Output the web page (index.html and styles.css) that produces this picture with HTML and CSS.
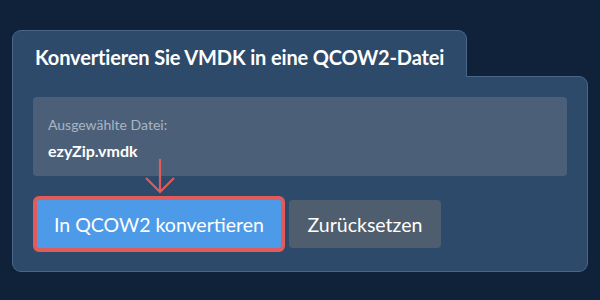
FILE: index.html
```html
<!DOCTYPE html>
<html lang="de">
<head>
    <meta charset="UTF-8">
    <meta name="viewport" content="width=device-width, initial-scale=1.0">
    <title>VMDK in QCOW2</title>
    <link rel="stylesheet" href="styles.css">
</head>
<body>
<div class="converter">
    <div class="tab">
        <h2>Konvertieren Sie VMDK in eine QCOW2-Datei</h2>
    </div>
    <div class="panel">
        <div class="filebox">
            <p class="label">Ausgewählte Datei:</p>
            <p class="filename">ezyZip.vmdk</p>
        </div>
        <div class="actions">
            <button class="btn convert">In QCOW2 konvertieren</button>
            <button class="btn reset">Zurücksetzen</button>
            <svg class="arrow" width="32" height="36" viewBox="0 0 32 36">
                <path d="M16 1 L16 34 M2 20 L16 34 L30 20" fill="none" stroke="#e05c5c" stroke-width="2.2"/>
            </svg>
        </div>
    </div>
</div>
</body>
</html>
```

FILE: styles.css
```css
body{
    margin: 0;
    background-color: #0f2239;
    font-family: 'Lato', 'Noto Sans', sans-serif;
    color: #fff;
}
.converter{
    padding: 30px 12px 0 12px;
    width: 576px;
}
.tab{
    display: inline-block;
    position: relative;
    z-index: 1;
    background-color: #2d4a6a;
    border: 1px solid #4a6788;
    border-bottom: none;
    border-radius: 9px 9px 0 0;
    padding: 0 22px 1px 22px;
    margin-bottom: -1px;
    height: 45px;
}
.tab h2{
    margin: 0;
    font-size: 20px;
    font-weight: bold;
    line-height: 53px;
    letter-spacing: -0.15px;
}
.panel{
    background-color: #2d4a6a;
    border: 1px solid #4a6788;
    border-radius: 0 9px 9px 9px;
    padding: 20px 20px 19px 20px;
}
.filebox{
    background-color: #4b6078;
    border-radius: 4px;
    padding: 19px 15px 12px 15px;
    height: 48px;
}
.filebox p{
    margin: 0;
}
.label{
    font-size: 14px;
    color: #a9b5c3;
    line-height: 18px;
}
.filename{
    font-size: 16px;
    font-weight: bold;
    line-height: 20px;
    margin-top: 7px !important;
}
.actions{
    position: relative;
    display: flex;
    align-items: center;
    gap: 4px;
    margin-top: 20px;
}
.btn{
    font-family: 'Lato', 'Noto Sans', sans-serif;
    font-size: 19.5px;
    color: #fff;
    border: none;
    height: 48px;
    border-radius: 4px;
    cursor: pointer;
}
.convert{
    background-color: #4d9be8;
    border: 4px solid #e05c5c;
    border-radius: 6px;
    height: 56px;
    width: 252px;
    padding: 0 14px;
}
.reset{
    background-color: #4e5e6e;
    width: 152px;
    padding: 0 14px;
}
.arrow{
    position: absolute;
    left: 111px;
    top: -38px;
}
```
